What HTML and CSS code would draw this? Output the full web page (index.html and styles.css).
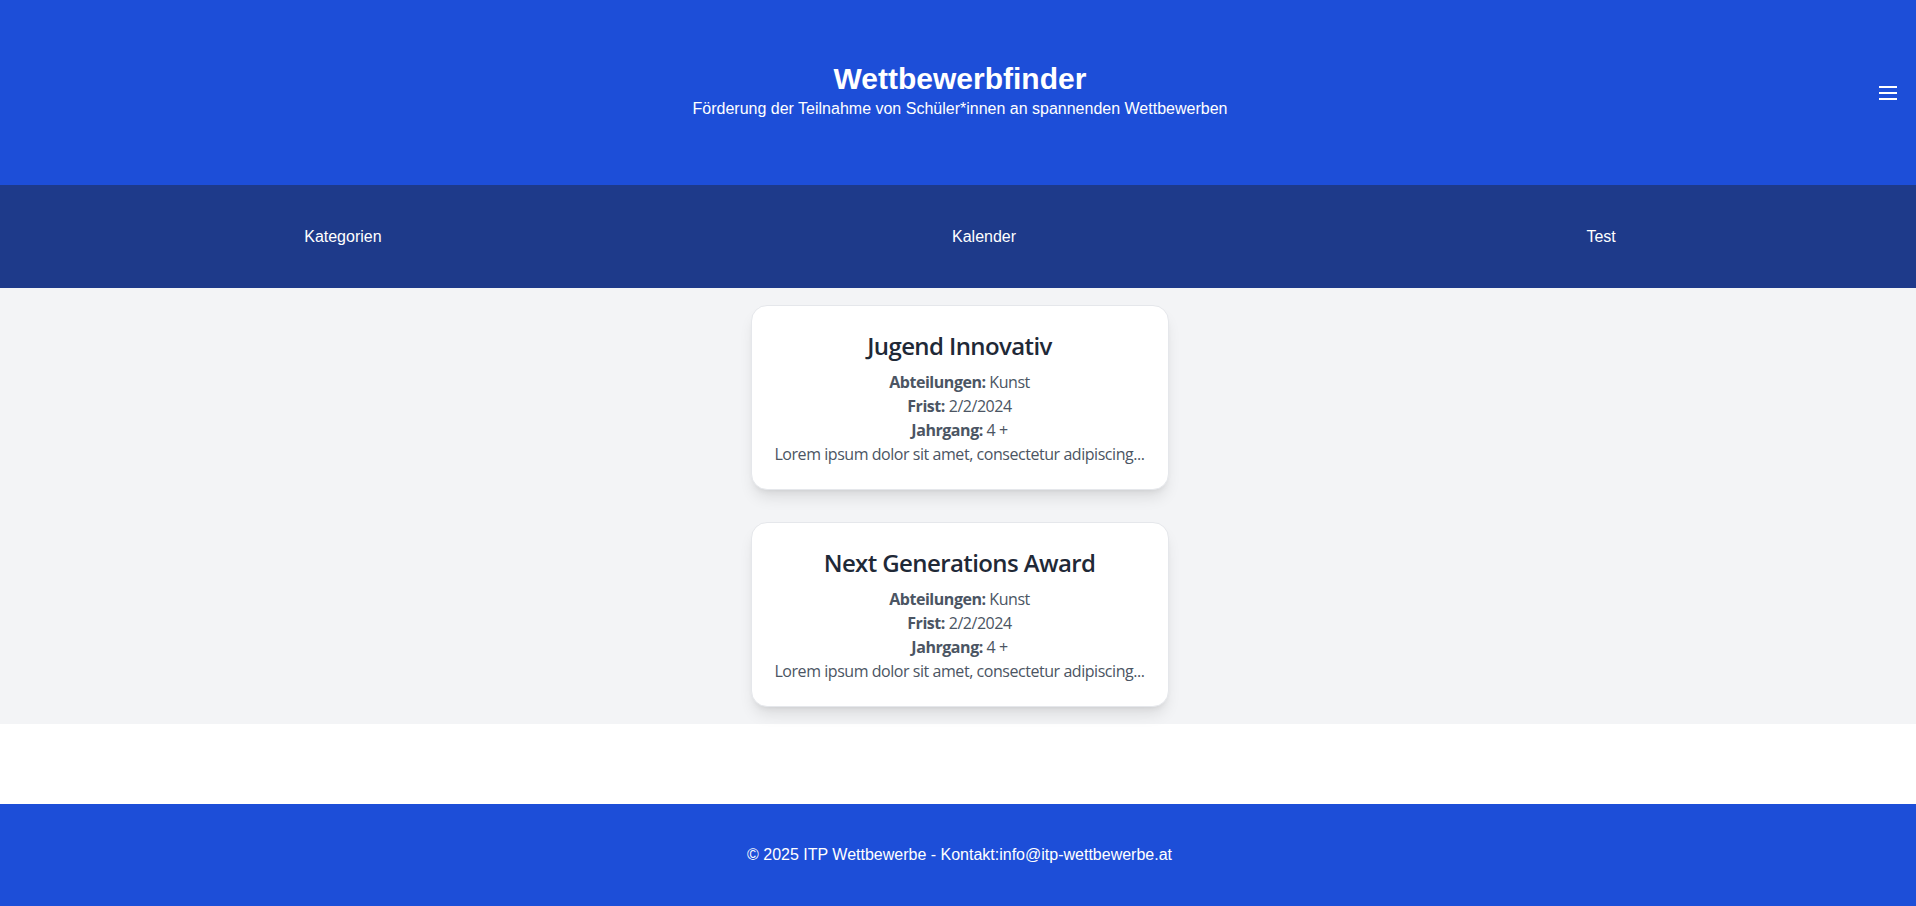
FILE: index.html
```html
<!DOCTYPE html>
<html lang="de">
<head>
<meta charset="utf-8">
<title>Wettbewerbfinder</title>
<link rel="stylesheet" href="styles.css">
</head>
<body>
<div class="page">
  <header class="site-header">
    <div class="brand">
      <h1 class="brand-title">Wettbewerbfinder</h1>
      <p class="brand-sub">Förderung der Teilnahme von Schüler*innen an spannenden Wettbewerben</p>
    </div>
    <button class="menu-btn" aria-label="Menü">
      <svg width="18" height="14" viewBox="0 0 18 14"><rect x="0" y="0" width="18" height="2" fill="#fff"/><rect x="0" y="6" width="18" height="2" fill="#fff"/><rect x="0" y="12" width="18" height="2" fill="#fff"/></svg>
    </button>
  </header>
  <nav class="site-nav">
    <a href="#">Kategorien</a>
    <a href="#">Kalender</a>
    <a href="#">Test</a>
  </nav>
  <main class="content">
    <article class="card">
      <h2 class="card-title">Jugend Innovativ</h2>
      <p class="card-line"><strong>Abteilungen:</strong> Kunst</p>
      <p class="card-line"><strong>Frist:</strong> 2/2/2024</p>
      <p class="card-line"><strong>Jahrgang:</strong> 4 +</p>
      <p class="card-line">Lorem ipsum dolor sit amet, consectetur adipiscing...</p>
    </article>
    <article class="card">
      <h2 class="card-title">Next Generations Award</h2>
      <p class="card-line"><strong>Abteilungen:</strong> Kunst</p>
      <p class="card-line"><strong>Frist:</strong> 2/2/2024</p>
      <p class="card-line"><strong>Jahrgang:</strong> 4 +</p>
      <p class="card-line">Lorem ipsum dolor sit amet, consectetur adipiscing...</p>
    </article>
  </main>
  <footer class="site-footer">
    <p>© 2025 ITP Wettbewerbe - Kontakt:info@itp-wettbewerbe.at</p>
  </footer>
</div>
</body>
</html>
```
FILE: styles.css
```css
* { box-sizing: border-box; }
html, body { margin: 0; padding: 0; }
body {
  font-family: "Liberation Sans", Arial, sans-serif;
  background: #ffffff;
  color: #fff;
}
.page {
  min-height: 100vh;
  display: flex;
  flex-direction: column;
}
.site-header {
  position: relative;
  height: 185px;
  background: #1d4ed8;
  display: flex;
  align-items: center;
  justify-content: center;
  padding: 0 0 3px 4px;
}
.brand { text-align: center; }
.brand-title {
  margin: 0;
  font-size: 30px;
  line-height: 36px;
  font-weight: 700;
}
.brand-sub {
  margin: 0;
  font-size: 16px;
  line-height: 24px;
}
.menu-btn {
  position: absolute;
  right: 19px;
  top: 86px;
  padding: 0;
  border: 0;
  background: none;
  display: flex;
  cursor: pointer;
}
.site-nav {
  height: 103px;
  background: #1e3a8a;
  display: flex;
  align-items: center;
  justify-content: space-around;
  padding: 0 15px 0 19px;
}
.site-nav a {
  color: #fff;
  text-decoration: none;
  font-size: 16px;
  line-height: 24px;
}
.content {
  background: #f3f4f6;
  padding: 17px 0 17px 3px;
  display: flex;
  flex-direction: column;
  align-items: center;
  gap: 32px;
}
.card {
  width: 418px;
  background: #fff;
  border: 1px solid #e5e7eb;
  border-radius: 16px;
  box-shadow: 0 10px 15px -3px rgba(0,0,0,0.1), 0 4px 6px -4px rgba(0,0,0,0.1);
  padding: 24px 12px 23px;
  text-align: center;
  font-family: "Open Sans", "Noto Sans", sans-serif;
  color: #4b5563;
}
.card-title {
  margin: 0 0 8px;
  font-size: 24px;
  line-height: 32px;
  font-weight: 600;
  letter-spacing: -0.6px;
  color: #1f2937;
}
.card-line {
  margin: 0;
  font-size: 16px;
  line-height: 24px;
  letter-spacing: -0.45px;
  white-space: nowrap;
}
.card-line strong { font-weight: 700; }
.site-footer {
  margin-top: auto;
  height: 102px;
  background: #1d4ed8;
  display: flex;
  align-items: center;
  justify-content: center;
  padding-left: 3px;
}
.site-footer p {
  margin: 0;
  font-size: 16px;
  line-height: 24px;
}
```
